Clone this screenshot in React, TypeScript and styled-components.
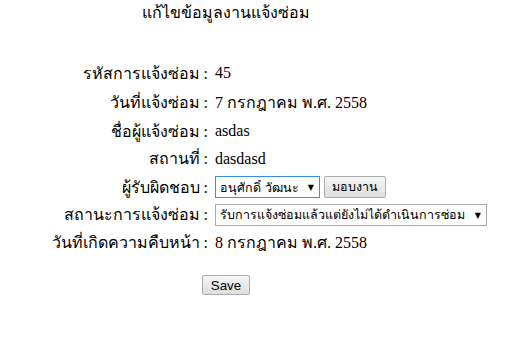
import * as React from "react";
import styled, { createGlobalStyle } from "styled-components";

const GlobalStyle = createGlobalStyle`
  body {
    margin: 1px 8px 8px;
    background: #ffffff;
    color: #000000;
    font-family: "Liberation Serif", "Times New Roman", serif;
    font-size: 16px;
  }
`;

interface Row {
  label: string;
  value?: string;
  control?: "owner" | "status";
}

const rows: Array<Row> = [
  { label: "รหัสการแจ้งซ่อม", value: "45" },
  { label: "วันที่แจ้งซ่อม", value: "7 กรกฎาคม พ.ศ. 2558" },
  { label: "ชื่อผู้แจ้งซ่อม", value: "asdas" },
  { label: "สถานที่", value: "dasdasd" },
  { label: "ผู้รับผิดชอบ", control: "owner" },
  { label: "สถานะการแจ้งซ่อม", control: "status" },
  { label: "วันที่เกิดความคืบหน้า", value: "8 กรกฎาคม พ.ศ. 2558" },
];

const rowHeights = [28, 31, 26, 29, 28, 27, 28];

const Page = styled.div`
  width: 436px;
  display: flex;
  flex-direction: column;
  align-items: center;
`;

const Title = styled.div`
  height: 24px;
  line-height: 24px;
  text-align: center;
`;

const FormTable = styled.div`
  align-self: stretch;
  margin-top: 34px;
  display: grid;
  grid-template-columns: 200px 1fr;
  column-gap: 7px;
`;

const Label = styled.div<{ $h: number }>`
  height: ${(p) => p.$h}px;
  display: flex;
  align-items: center;
  justify-content: flex-end;
  white-space: nowrap;
`;

const Value = styled.div<{ $h: number }>`
  height: ${(p) => p.$h}px;
  display: flex;
  align-items: center;
  gap: 4px;
  white-space: nowrap;
`;

const SelectWrap = styled.div<{ $w: number }>`
  position: relative;
  width: ${(p) => p.$w}px;
  height: 22px;
`;

const Select = styled.select<{ $focus?: boolean }>`
  appearance: none;
  -webkit-appearance: none;
  width: 100%;
  height: 100%;
  box-sizing: border-box;
  margin: 0;
  padding: 0 16px 0 4px;
  border: 1px solid ${(p) => (p.$focus ? "#3c8ce7" : "#a9a9a9")};
  border-radius: 0;
  background: #ffffff;
  color: #000000;
  font-family: Tahoma, "DejaVu Sans", "Noto Sans", sans-serif;
  font-size: 12.5px;
  outline: none;
`;

const Arrow = styled.span`
  position: absolute;
  right: 6px;
  top: 50%;
  transform: translateY(-50%);
  font-size: 8px;
  color: #000000;
  pointer-events: none;
  font-family: "DejaVu Sans", sans-serif;
`;

const Button = styled.button`
  box-sizing: border-box;
  height: 22px;
  margin: 0;
  padding: 0 7px;
  border: 1px solid #adadad;
  border-radius: 2px;
  background: linear-gradient(#f6f6f6, #dedede);
  color: #000000;
  font-family: Tahoma, "DejaVu Sans", "Noto Sans", sans-serif;
  font-size: 12.5px;
`;

const SaveButton = styled(Button)`
  margin-top: 19px;
  height: 20px;
  padding: 0 8px;
  font-family: "Liberation Sans", Arial, sans-serif;
  font-size: 13.3px;
`;

const renderValue = (row: Row) => {
  if (row.control === "owner") {
    return (
      <>
        <SelectWrap $w={105}>
          <Select $focus defaultValue="a">
            <option value="a">อนุศักดิ์ วัฒนะ</option>
          </Select>
          <Arrow>▼</Arrow>
        </SelectWrap>
        <Button>มอบงาน</Button>
      </>
    );
  }
  if (row.control === "status") {
    return (
      <SelectWrap $w={272}>
        <Select defaultValue="s">
          <option value="s">รับการแจ้งซ่อมแล้วแต่ยังไม่ได้ดำเนินการซ่อม</option>
        </Select>
        <Arrow>▼</Arrow>
      </SelectWrap>
    );
  }
  return row.value;
};

export default function App() {
  return (
    <Page>
      <GlobalStyle />
      <Title>แก้ไขข้อมูลงานแจ้งซ่อม</Title>
      <FormTable>
        {rows.map((row, i) => (
          <React.Fragment key={row.label}>
            <Label $h={rowHeights[i]}>{row.label} :</Label>
            <Value $h={rowHeights[i]}>{renderValue(row)}</Value>
          </React.Fragment>
        ))}
      </FormTable>
      <SaveButton>Save</SaveButton>
    </Page>
  );
}
